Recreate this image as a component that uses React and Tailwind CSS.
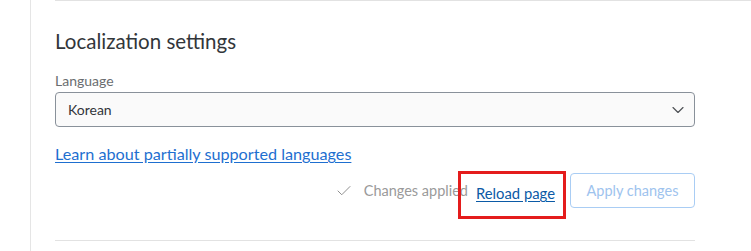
import { ChevronDown, Check } from 'lucide-react';

export default function App() {
  return (
    <div className="flex w-[751px] h-[251px] bg-white overflow-hidden" style={{ fontFamily: 'Lato, "Liberation Sans", sans-serif' }}>
      <div className="w-[30px] shrink-0" />
      <div className="border-l border-[#e5e5e5] pl-6 flex-1">
        <div className="border-t border-[#e2e2e2] w-[700px]" />
        <div className="w-[640px]">
          <h2 className="mt-[26px] text-[20.5px] leading-[28px] text-[#32363a]">Localization settings</h2>
          <label className="block mt-[17px] text-[14px] leading-[18px] text-[#6a6d70]">Language</label>
          <div className="mt-[2px] h-[35px] flex items-center justify-between pl-3 pr-[6px] border border-[#89919a] rounded-[4px] bg-[#fafafa]">
            <span className="text-[14px] text-[#32363a]">Korean</span>
            <ChevronDown size={20} strokeWidth={1.4} className="text-[#4f5256]" />
          </div>
          <a href="#" className="inline-block mt-[16px] text-[16.2px] leading-[22px] text-[#1e6fd0] underline underline-offset-2">Learn about partially supported languages</a>
          <div className="mt-[5px] flex items-start justify-end">
            <div className="mt-[2px] h-[35px] flex items-center">
              <Check size={18} strokeWidth={1.3} className="text-[#8c8c8c] mr-[11px]" />
              <span className="text-[14.5px] text-[#9a9a9a]">Changes applied</span>
            </div>
            <div className="ml-[-10px] w-[108px] h-[48px] border-[3px] border-[#e41c1c] pt-[7px] pl-[15px]">
              <a href="#" className="text-[14.8px] leading-[20px] text-[#0b5aa6] underline underline-offset-2">Reload page</a>
            </div>
            <button className="ml-[4px] mt-[2px] h-[35px] w-[125px] border border-[#a9cdf4] rounded-[4px] text-[14.5px] text-[#9ec3ee] bg-white">Apply changes</button>
          </div>
          <div className="mt-[21px] border-t border-[#e2e2e2]" />
        </div>
      </div>
    </div>
  );
}
